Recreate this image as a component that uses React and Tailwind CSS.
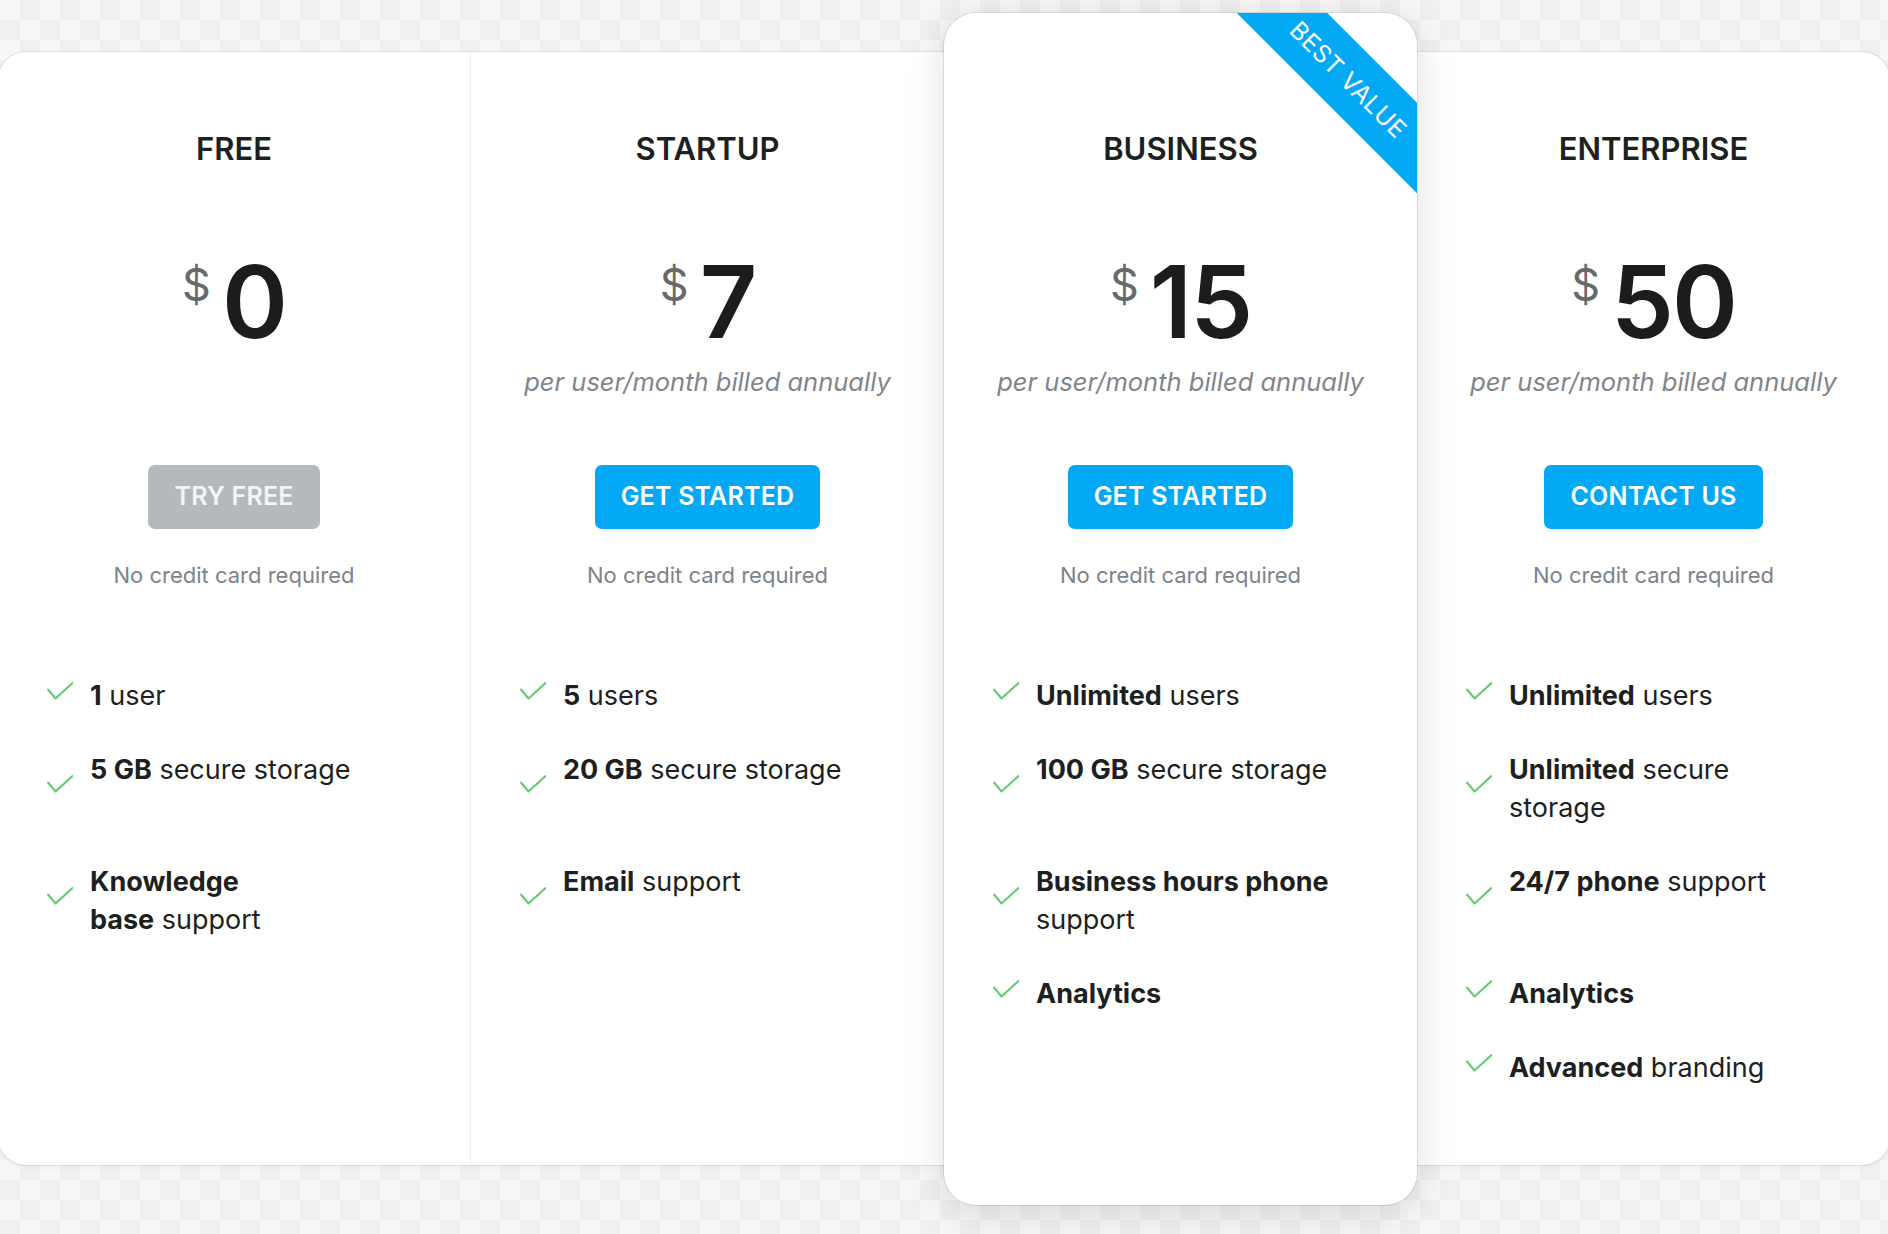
import React from 'react';

const ROW_LINES = [1, 2, 2, 1, 1];

const plans = [
  {
    name: 'FREE',
    price: '0',
    billing: null,
    cta: 'TRY FREE',
    muted: true,
    features: [
      <><b className="font-bold">1</b> user</>,
      <><b className="font-bold">5 GB</b> secure storage</>,
      <><b className="font-bold">Knowledge<br />base</b> support</>,
    ],
  },
  {
    name: 'STARTUP',
    price: '7',
    billing: 'per user/month billed annually',
    cta: 'GET STARTED',
    features: [
      <><b className="font-bold">5</b> users</>,
      <><b className="font-bold">20 GB</b> secure storage</>,
      <><b className="font-bold">Email</b> support</>,
    ],
  },
  {
    name: 'BUSINESS',
    price: '15',
    billing: 'per user/month billed annually',
    cta: 'GET STARTED',
    featured: true,
    features: [
      <><b className="font-bold">Unlimited</b> users</>,
      <><b className="font-bold">100 GB</b> secure storage</>,
      <><b className="font-bold">Business hours phone</b> support</>,
      <><b className="font-bold">Analytics</b></>,
    ],
  },
  {
    name: 'ENTERPRISE',
    price: '50',
    billing: 'per user/month billed annually',
    cta: 'CONTACT US',
    features: [
      <><b className="font-bold">Unlimited</b> users</>,
      <><b className="font-bold">Unlimited</b> secure storage</>,
      <><b className="font-bold">24/7 phone</b> support</>,
      <><b className="font-bold">Analytics</b></>,
      <><b className="font-bold">Advanced</b> branding</>,
    ],
  },
];

const Check = () => (
  <svg width="26" height="18" viewBox="0 0 26 18" fill="none" className="mb-[10px] shrink-0">
    <path d="M1 7.5L8.5 16.5L25.5 1" stroke="#5fcb6e" strokeWidth="2" strokeLinecap="round" strokeLinejoin="round" />
  </svg>
);

const PlanBody = ({ plan }) => (
  <>
    <h2 className="text-[31px] leading-none font-semibold text-[#1d1f21] text-center">{plan.name}</h2>

    <div className="mt-[88px] flex items-start justify-center">
      <span className="mt-[10px] mr-[11px] text-[45px] leading-none text-[#666a6d]">$</span>
      <span className="text-[100px] leading-none font-semibold tracking-[-2px] text-[#1a1c1e]">{plan.price}</span>
    </div>

    <div className="mt-[17px] h-[26px] text-center text-[25.5px] leading-none italic text-[#7f858b]">
      {plan.billing}
    </div>

    <div className="mt-[70px] flex justify-center">
      <button
        className={`h-[64px] px-[26px] rounded-[7px] text-[25px] font-semibold tracking-[0.2px] ${
          plan.muted ? 'bg-[#b5b9bd] text-[#f3f4f5]' : 'bg-[#03a9f4] text-white'
        }`}
      >
        {plan.cta}
      </button>
    </div>

    <p className="mt-[35px] text-center text-[22px] leading-none text-[#7d838a]">No credit card required</p>

    <ul className="mt-[91px] flex flex-col gap-[36px] pl-[49px] pr-[64px]">
      {plan.features.map((f, i) => (
        <li
          key={i}
          className={`flex items-center gap-[17px] ${ROW_LINES[i] === 2 ? 'h-[76px]' : 'h-[38px]'}`}
        >
          <Check />
          <span className="self-start text-[27px] leading-[38px] text-[#1d1f21]">{f}</span>
        </li>
      ))}
    </ul>
  </>
);

export default function App() {
  return (
    <div
      className="w-full h-screen overflow-hidden flex justify-center bg-[#f3f3f3] bg-[conic-gradient(#f0f0f0_25%,#f7f7f7_0_50%,#f0f0f0_0_75%,#f7f7f7_0)] bg-size-[40px_40px]"
      style={{ fontFamily: 'Inter, "Noto Sans", sans-serif' }}
    >
      <div className="shrink-0 mt-[52px] w-[1892px] h-[1113px] flex bg-white rounded-[28px] shadow-[0_0_0_1px_rgba(0,0,0,0.07),0_2px_6px_rgba(0,0,0,0.04)]">
        {plans.map((plan) =>
          plan.featured ? (
            <div
              key={plan.name}
              className="relative z-10 self-start -mt-[39px] w-[473px] h-[1192px] shrink-0 overflow-hidden bg-white rounded-[32px] pt-[120px] shadow-[0_0_0_1px_rgba(0,0,0,0.09),0_8px_40px_rgba(0,0,0,0.13)]"
            >
              <div className="absolute left-[258px] top-[38px] w-[300px] h-[64px] rotate-45 bg-[#03a9f4] flex items-center justify-center pr-[10px] text-white text-[24.5px] tracking-[0.5px]">
                BEST VALUE
              </div>
              <PlanBody plan={plan} />
            </div>
          ) : (
            <div
              key={plan.name}
              className={`w-[473px] shrink-0 pt-[81px] ${plan.name === 'FREE' ? 'border-r border-[#ececec]' : ''}`}
            >
              <PlanBody plan={plan} />
            </div>
          )
        )}
      </div>
    </div>
  );
}
